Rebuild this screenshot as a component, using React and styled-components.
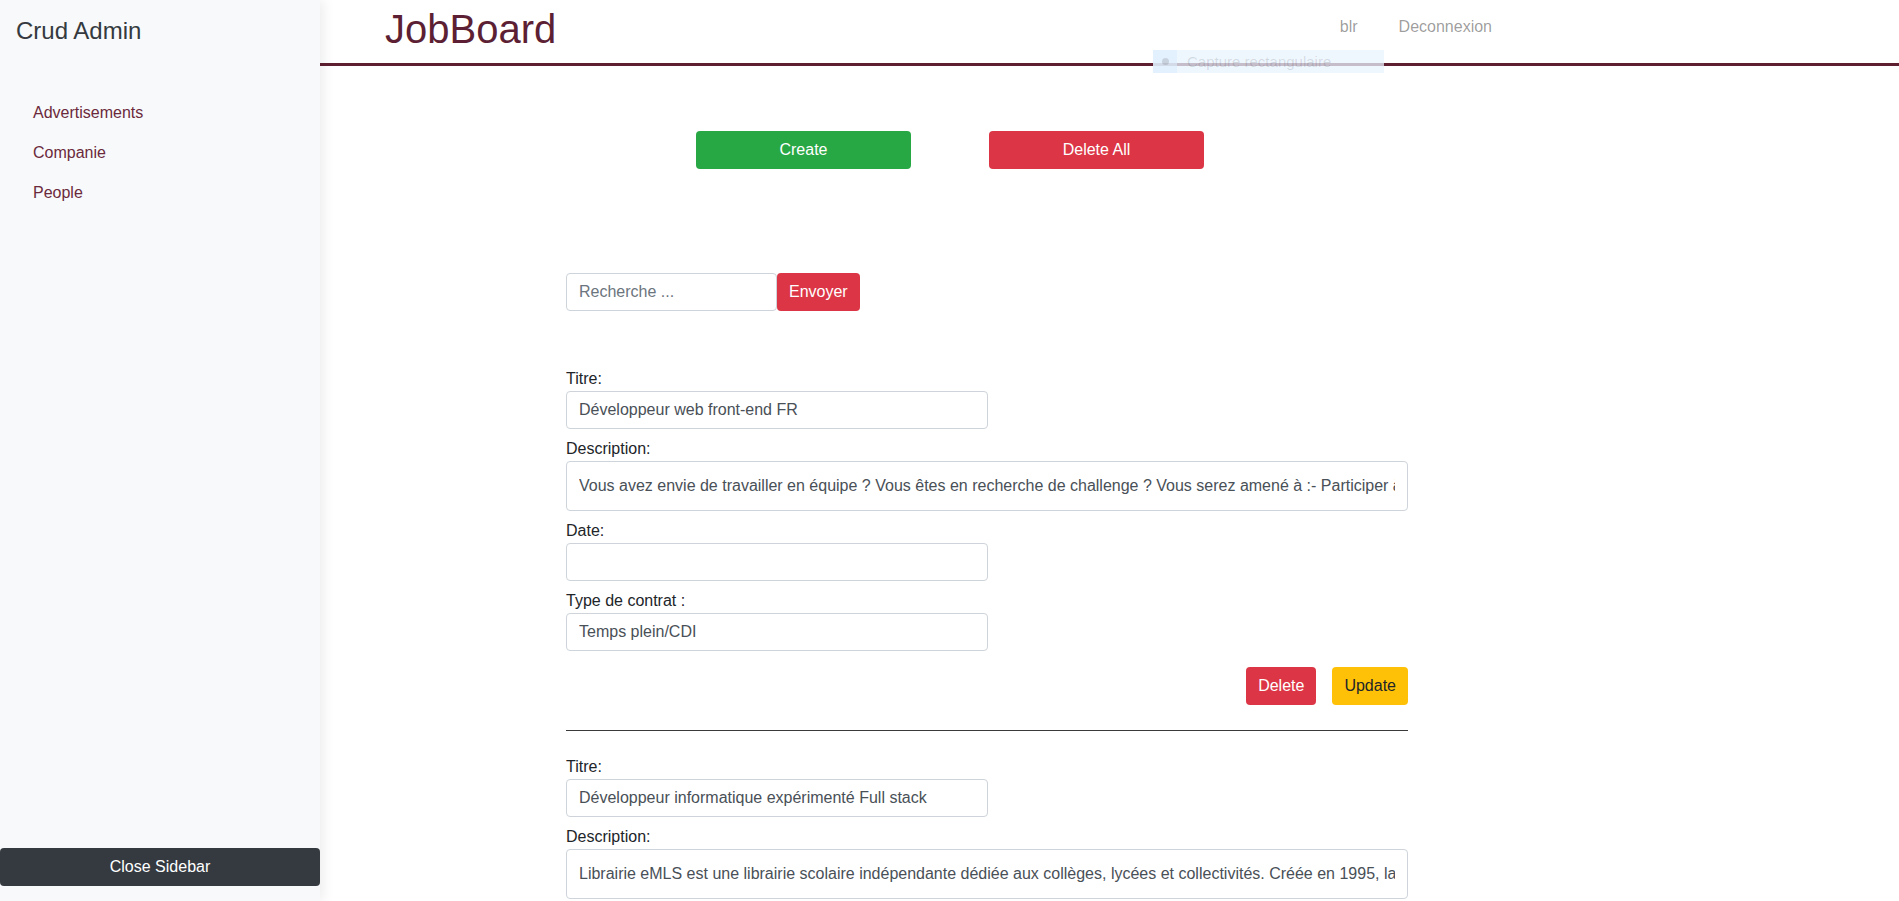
import React from 'react';
import styled, { createGlobalStyle } from 'styled-components';

const GlobalStyle = createGlobalStyle`
  * {
    box-sizing: border-box;
  }

  body {
    margin: 0;
    font-family: "Liberation Sans", Arial, sans-serif;
    font-size: 16px;
    color: #212529;
    background: #ffffff;
  }
`;

const Page = styled.div`
  display: flex;
  min-height: 100vh;
`;

const Sidebar = styled.aside`
  position: sticky;
  top: 0;
  align-self: flex-start;
  flex: 0 0 320px;
  height: 100vh;
  background: #f8f9fa;
  box-shadow: 3px 0 12px rgba(0, 0, 0, 0.08);
  display: flex;
  flex-direction: column;
  z-index: 2;
`;

const SideTitle = styled.h4`
  margin: 0;
  padding: 16px 16px 0;
  font-size: 24px;
  font-weight: 400;
  line-height: 29px;
  color: #343a40;
`;

const SideNav = styled.nav`
  display: flex;
  flex-direction: column;
  margin-top: 48px;
  padding-left: 17px;
`;

const SideLink = styled.a`
  padding: 8px 16px;
  line-height: 24px;
  font-size: 16px;
  color: #6b2a3c;
  text-decoration: none;
`;

const CloseButton = styled.button`
  margin-top: auto;
  margin-bottom: 15px;
  height: 38px;
  width: 100%;
  border: none;
  border-radius: 4px;
  background: #343a40;
  color: #ffffff;
  font-family: inherit;
  font-size: 16px;
`;

const Main = styled.main`
  flex: 1;
  min-width: 0;
  display: flex;
  flex-direction: column;
  padding-bottom: 40px;
`;

const Header = styled.header`
  position: relative;
  height: 66px;
  border-bottom: 3px solid #5e1f30;
  display: flex;
  align-items: flex-start;
`;

const Brand = styled.h1`
  margin: 0 0 0 65px;
  padding-top: 5px;
  font-size: 40px;
  line-height: 48px;
  font-weight: 500;
  color: #5c1f33;
`;

const TopNav = styled.div`
  margin-left: auto;
  margin-right: 407px;
  padding-top: 15px;
  display: flex;
  gap: 41px;
`;

const TopLink = styled.a`
  line-height: 24px;
  font-size: 16px;
  color: rgba(0, 0, 0, 0.4);
  text-decoration: none;
`;

const SnipHint = styled.div`
  position: absolute;
  left: 833px;
  top: 50px;
  width: 231px;
  height: 23px;
  display: flex;
  align-items: center;
  background: rgba(232, 243, 253, 0.75);
  color: rgba(0, 0, 0, 0.12);
  font-size: 15px;
  pointer-events: none;

  span.dot {
    flex: 0 0 24px;
    height: 100%;
    display: flex;
    align-items: center;
    justify-content: center;
    background: rgba(220, 236, 252, 0.6);
  }

  span.dot::before {
    content: '';
    width: 7px;
    height: 7px;
    border-radius: 50%;
    background: rgba(0, 0, 0, 0.12);
  }

  span.label {
    padding-left: 10px;
  }
`;

const Content = styled.div`
  margin-left: 246px;
  width: 842px;
  display: flex;
  flex-direction: column;
`;

const ActionBar = styled.div`
  display: flex;
  gap: 78px;
  padding-left: 130px;
  margin-top: 65px;
`;

const Button = styled.button`
  height: 38px;
  padding: 0 12px;
  width: ${(p) => (p.$wide ? '215px' : 'auto')};
  border: none;
  border-radius: 4px;
  font-family: inherit;
  font-size: 16px;
  color: ${(p) => (p.$variant === 'warning' ? '#212529' : '#ffffff')};
  background: ${(p) =>
    p.$variant === 'success' ? '#28a745' : p.$variant === 'warning' ? '#ffc107' : '#dc3545'};
`;

const SearchForm = styled.form`
  display: flex;
  margin-top: 104px;
`;

const SearchInput = styled.input`
  width: 211px;
  height: 38px;
  padding: 0 12px;
  border: 1px solid #ced4da;
  border-radius: 4px;
  font-family: inherit;
  font-size: 16px;
  color: #495057;

  &::placeholder {
    color: #6c757d;
  }
`;

const Entry = styled.div`
  display: flex;
  flex-direction: column;
  gap: 8px;
  margin-top: ${(p) => (p.$first ? '56px' : '24px')};
`;

const Field = styled.div`
  display: flex;
  flex-direction: column;
`;

const Label = styled.label`
  line-height: 24px;
  font-size: 16px;
  color: #212529;
`;

const TextInput = styled.input`
  width: ${(p) => (p.$full ? '842px' : '422px')};
  height: ${(p) => (p.$tall ? '50px' : '38px')};
  padding: 0 12px;
  border: 1px solid #ced4da;
  border-radius: 4px;
  font-family: inherit;
  font-size: 16px;
  color: #495057;
  background: #ffffff;
`;

const EntryActions = styled.div`
  display: flex;
  justify-content: flex-end;
  gap: 16px;
  margin-top: 8px;
`;

const Divider = styled.hr`
  margin: 25px 0 0;
  border: none;
  border-top: 1px solid #3a3a3a;
`;

const adverts = [
  {
    title: 'Développeur web front-end FR',
    description:
      'Vous avez envie de travailler en équipe ? Vous êtes en recherche de challenge ? Vous serez amené à :- Participer à la conception et au développement des applications',
    date: '',
    contract: 'Temps plein/CDI',
  },
  {
    title: 'Développeur informatique expérimenté Full stack',
    description:
      'Librairie eMLS est une librairie scolaire indépendante dédiée aux collèges, lycées et collectivités. Créée en 1995, la Librairie eMLS accompagne les établissements',
    date: '',
    contract: 'Temps plein/CDI',
  },
];

function AdvertEntry({ advert, first }) {
  return (
    <>
      <Entry $first={first}>
        <Field>
          <Label>Titre:</Label>
          <TextInput defaultValue={advert.title} />
        </Field>
        <Field>
          <Label>Description:</Label>
          <TextInput $full $tall defaultValue={advert.description} />
        </Field>
        <Field>
          <Label>Date:</Label>
          <TextInput defaultValue={advert.date} />
        </Field>
        <Field>
          <Label>Type de contrat :</Label>
          <TextInput defaultValue={advert.contract} />
        </Field>
        <EntryActions>
          <Button $variant="danger">Delete</Button>
          <Button $variant="warning">Update</Button>
        </EntryActions>
      </Entry>
      <Divider />
    </>
  );
}

export default function App() {
  return (
    <>
      <GlobalStyle />
      <Page>
        <Sidebar>
          <SideTitle>Crud Admin</SideTitle>
          <SideNav>
            <SideLink href="#">Advertisements</SideLink>
            <SideLink href="#">Companie</SideLink>
            <SideLink href="#">People</SideLink>
          </SideNav>
          <CloseButton>Close Sidebar</CloseButton>
        </Sidebar>

        <Main>
          <Header>
            <Brand>JobBoard</Brand>
            <TopNav>
              <TopLink href="#">blr</TopLink>
              <TopLink href="#">Deconnexion</TopLink>
            </TopNav>
            <SnipHint>
              <span className="dot" />
              <span className="label">Capture rectangulaire</span>
            </SnipHint>
          </Header>

          <Content>
            <ActionBar>
              <Button $variant="success" $wide>Create</Button>
              <Button $variant="danger" $wide>Delete All</Button>
            </ActionBar>

            <SearchForm onSubmit={(e) => e.preventDefault()}>
              <SearchInput placeholder="Recherche ..." />
              <Button $variant="danger">Envoyer</Button>
            </SearchForm>

            {adverts.map((advert, i) => (
              <AdvertEntry key={i} advert={advert} first={i === 0} />
            ))}
          </Content>
        </Main>
      </Page>
    </>
  );
}
